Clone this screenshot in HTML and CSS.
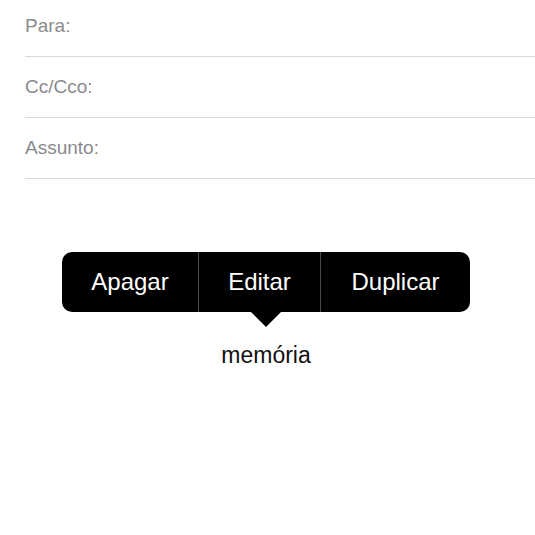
FILE: index.html
```html
<!DOCTYPE html>
<html lang="pt">

<head>
    <meta charset="UTF-8">
    <meta name="viewport" content="width=device-width, initial-scale=1.0">
    <title>Nova Mensagem</title>

    <link rel="stylesheet" href="styles.css">
</head>

<body>
    <!-- Header fields -->
    <div class="fields">
        <div class="field">Para:</div>
        <div class="field">Cc/Cco:</div>
        <div class="field">Assunto:</div>
    </div>

    <!-- Edit menu over the selected word -->
    <div class="callout">
        <div class="menu">
            <div class="menu-item item-delete">Apagar</div>
            <div class="menu-item item-edit">Editar</div>
            <div class="menu-item item-copy">Duplicar</div>
        </div>
        <div class="arrow"></div>
        <div class="word">memória</div>
    </div>
</body>

</html>
```

FILE: styles.css
```css
body {
    font-family: "Liberation Sans", Arial, sans-serif;
    margin: 0;
    background-color: #fff;
}

.fields {
    margin-top: -4px;
    padding-left: 25px;
}

.field {
    height: 41px;
    padding-top: 19px;
    font-size: 19px;
    line-height: 22px;
    color: #8a8a8e;
    border-bottom: 1px solid #d9d9d9;
}

.callout {
    width: 408px;
    margin: 73px 0 0 62px;
}

.menu {
    display: flex;
    height: 60px;
    background-color: #000;
    border-radius: 10px;
}

.menu-item {
    font-size: 24px;
    line-height: 60px;
    color: #fff;
    text-align: center;
}

.item-delete {
    width: 136px;
}

.item-edit {
    width: 121px;
    border-left: 1px solid #4a4a4a;
}

.item-copy {
    flex: 1;
    border-left: 1px solid #4a4a4a;
}

.arrow {
    width: 0;
    height: 0;
    margin: 0 auto;
    border-left: 15px solid transparent;
    border-right: 15px solid transparent;
    border-top: 15px solid #000;
}

.word {
    margin-top: 15px;
    font-size: 23px;
    line-height: 26px;
    color: #111;
    text-align: center;
}
```
